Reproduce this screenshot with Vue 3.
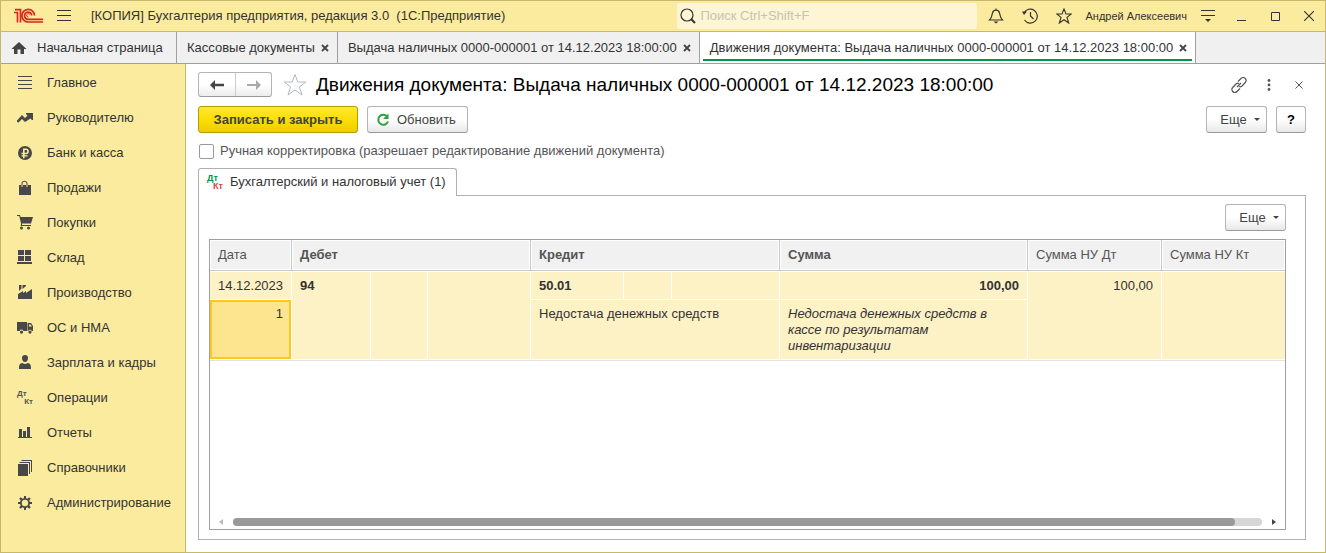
<script setup>
import { ref } from 'vue'

const search = ref('')
const manual = ref(false)

const tabs = [
  { title: 'Кассовые документы', active: false },
  { title: 'Выдача наличных 0000-000001 от 14.12.2023 18:00:00', active: false },
  { title: 'Движения документа: Выдача наличных 0000-000001 от 14.12.2023 18:00:00', active: true },
]

const sections = [
  { name: 'Главное', icon: 'M1 1h14v1H1zM1 5h14v1H1zM1 9h14v1H1zM1 13h14v1H1z' },
  { name: 'Руководителю', icon: 'M0 10.500L5 5l3 3 2.500-2.500L9 4V3h7v7h-1l-1.500-1.500L8 12 5 9l-3.500 3.500L0 12z' },
  { name: 'Банк и касса', icon: 'M8 1a7 7 0 1 1 0 14A7 7 0 0 1 8 1zM6 3.500v4.300H4.500v1.500H6v.9H4.500v1.300H6v1.700h1.600v-1.700h3v-1.300h-3v-.9h1.600c3.600 0 3.600-5.800 0-5.800zM7.600 5h1.500c1.500 0 1.500 2.800 0 2.800H7.600z' },
  { name: 'Продажи', icon: 'M2 5h2.500v2h1V5h4v2h1V5H14v10H2zM4.500 5V3.500C4.500-.3 10.500-.3 10.500 3.500V5h-1V3.500c0-2.300-4-2.300-4 0V5z' },
  { name: 'Покупки', icon: 'M0 0h3l.6 2H16l-2 6.500H5.200L5 10h9v1H3.500l.6-2.200L2.200 1H0zM4.500 11.500a1.500 1.500 0 1 1 0 3 1.500 1.500 0 0 1 0-3zM11.500 11.500a1.500 1.500 0 1 1 0 3 1.500 1.500 0 0 1 0-3z' },
  { name: 'Склад', icon: 'M1 0h6v5H1zM8 0h6v5H8zM1 6h6v5H1zM8 6h6v5H8zM0 12h15v2H0z' },
  { name: 'Производство', icon: 'M1 14V9l5-3v2l3-2v2l6-4v10zM2 0h2.500v3.500L2 6zM5.500 0H9v1L5.500 4z' },
  { name: 'ОС и НМА', icon: 'M0 2h10v9H6.400a2 2 0 0 0-3.800 0H0zM10.500 3H14l2 3v5h-1.200a2 2 0 0 0-3.600 0h-.7zM12 4.500v2h3l-1.500-2zM4.500 10.500a1.600 1.600 0 1 1 0 3.200 1.600 1.600 0 0 1 0-3.200zM13 10.500a1.600 1.600 0 1 1 0 3.200 1.600 1.600 0 0 1 0-3.200z' },
  { name: 'Зарплата и кадры', icon: 'M8 0a3 3 0 0 1 3 3c0 2-1 4-3 4S5 5 5 3a3 3 0 0 1 3-3zM5.500 8c1.500 1.300 3.500 1.300 5 0C13.500 8.500 14 10 14 14H2c0-4 .5-5.500 3.500-6z' },
  { name: 'Операции', dtkt: true },
  { name: 'Отчеты', icon: 'M2 4h3v8H2zM6 6h3v6H6zM10 2h3v10h-3zM1 12h14v1H1z' },
  { name: 'Справочники', icon: 'M1 4h10v12H1zM2.500 2H13v12h-1V3H2.500zM4.500 0H15v12h-1V1H4.500z' },
  { name: 'Администрирование', icon: 'M7 1h2v2l1.500.7 1.600-1.500 1.600 1.600-1.500 1.600L13 7h2v2h-2l-.7 1.600 1.500 1.600-1.600 1.600-1.600-1.500L9 13v2H7v-2l-1.600-.7-1.600 1.500-1.600-1.600 1.500-1.600L3 9H1V7h2l.7-1.600-1.500-1.600 1.600-1.600 1.600 1.500L7 3zM8 4.800a3.200 3.200 0 1 0 0 6.400 3.200 3.200 0 0 0 0-6.400z' },
]
</script>

<template>
  <div class="window">
    <header class="titlebar">
      <svg class="logo" viewBox="0 0 30 16" fill="none" stroke="#d9251d" stroke-width="1.700">
        <path d="M0 4.500h3.500V14.500M1 1.700h5.500V14.500" />
        <path d="M20.500 7.500A6.300 6.300 0 1 0 14.500 14H29" />
        <path d="M17.700 7.500A3.600 3.600 0 1 0 14.500 11.300H29" />
        <path d="M15.500 6.500A1.600 1.600 0 1 0 14.500 9" stroke-width="1" />
      </svg>
      <button class="plain burger" aria-label="Меню">
        <svg width="14" height="12" viewBox="0 0 14 12"><path d="M0 0h14v1H0zM0 5h14v1H0zM0 10h14v1H0z" fill="#333" /></svg>
      </button>
      <span class="app-name">[КОПИЯ] Бухгалтерия предприятия, редакция 3.0&nbsp; (1С:Предприятие)</span>
      <label class="search">
        <svg width="16" height="16" viewBox="0 0 16 16" fill="none" stroke="#333"><circle cx="7" cy="7" r="6" stroke-width="1.200" /><path d="M11.300 11.300L15 15" stroke-width="2" /></svg>
        <input v-model="search" type="text" placeholder="Поиск Ctrl+Shift+F" aria-label="Поиск">
      </label>
      <div class="tools">
        <button class="plain tool" aria-label="Уведомления">
          <svg width="16" height="16" viewBox="0 0 16 16" fill="none" stroke="#333" stroke-width="1.200"><path d="M1.500 12C4 9.500 3.500 8 4.500 5 5 3 6.500 2.200 8 2.200S11 3 11.500 5c1 3 .5 4.500 3 7zM8 .5v2" /><path d="M5.500 13.500h5L8 15.500z" fill="#333" stroke="none" /></svg>
        </button>
        <button class="plain tool" aria-label="История">
          <svg width="16" height="16" viewBox="0 0 16 16" fill="none" stroke="#333" stroke-width="1.200"><path d="M2 5a7 7 0 1 1 .5 7M8.500 4v4l3 3" /><path d="M0 3.500h5L2 7z" fill="#333" stroke="none" /></svg>
        </button>
        <button class="plain tool" aria-label="Избранное">
          <svg width="16" height="16" viewBox="0 0 16 16" fill="none" stroke="#333" stroke-width="1.100"><path d="M8 1l2 5h5.200l-4.200 3.400L12.700 15 8 11.700 3.300 15 5 9.400.8 6H6z" /></svg>
        </button>
        <span class="user">Андрей Алексеевич</span>
        <button class="plain tool" aria-label="Сервис">
          <svg width="14" height="14" viewBox="0 0 14 14"><path d="M0 1h14v1H0zM0 6h14v1H0zM4 10h6l-3 3z" fill="#333" /></svg>
        </button>
        <button class="plain tool" aria-label="Свернуть">
          <svg width="10" height="10" viewBox="0 0 10 10"><path d="M0 9h9v1H0z" fill="#333" /></svg>
        </button>
        <button class="plain tool" aria-label="Развернуть">
          <svg width="10" height="10" viewBox="0 0 10 10"><path d="M.5 1.500h8v8h-8z" fill="none" stroke="#333" /></svg>
        </button>
        <button class="plain tool" aria-label="Закрыть программу">
          <svg width="10" height="10" viewBox="0 0 10 10"><path d="M0 0l10 10M10 0L0 10" stroke="#333" stroke-width="1.100" /></svg>
        </button>
      </div>
    </header>

    <nav class="tabs">
      <a class="tab home" href="#">
        <svg width="16" height="14" viewBox="0 0 16 14"><path d="M8 1l7.500 7H13v5H9.500V8.500h-3V13H3V8H.5z" fill="#444" /></svg>
        Начальная страница
      </a>
      <div v-for="tab in tabs" :key="tab.title" class="tab" :class="{ active: tab.active }">
        <a href="#">{{ tab.title }}</a>
        <button class="plain" aria-label="Закрыть вкладку">
          <svg width="8" height="8" viewBox="0 0 8 8"><path d="M1 1l6 6M7 1L1 7" stroke="#444" stroke-width="1.800" /></svg>
        </button>
      </div>
    </nav>

    <div class="body">
      <nav class="sidebar">
        <a v-for="s in sections" :key="s.name" href="#" class="section">
          <span v-if="s.dtkt" class="dtkt"><span>Дт</span><span>Кт</span></span>
          <svg v-else width="16" height="16" viewBox="0 0 16 16"><path :d="s.icon" fill="#484848" fill-rule="evenodd" /></svg>
          {{ s.name }}
        </a>
      </nav>

      <main class="content">
        <div class="heading">
          <div class="history">
            <button aria-label="Назад"><svg width="14" height="10" viewBox="0 0 14 10"><path d="M0 5l5-5v3.700h9v2.600H5V10z" fill="#444" /></svg></button>
            <button aria-label="Вперед"><svg width="14" height="10" viewBox="0 0 14 10"><path d="M14 5L9 0v4H0v2h9v4z" fill="#aaa" /></svg></button>
          </div>
          <button class="plain" aria-label="Добавить в избранное">
            <svg width="24" height="24" viewBox="0 0 24 24"><path d="M12 1.500l2.800 7.500h8l-6.400 5 2.600 8-7-5-7 5 2.600-8L1.200 9h8z" fill="none" stroke="#b4b9c0" /></svg>
          </button>
          <h1>Движения документа: Выдача наличных 0000-000001 от 14.12.2023 18:00:00</h1>
          <div class="heading-tools">
            <button class="plain" aria-label="Получить ссылку">
              <svg width="16" height="16" viewBox="0 0 16 16" fill="none" stroke="#555" stroke-width="1.200"><path d="M7 4.500l3-3a2.800 2.800 0 0 1 4.300 0 2.800 2.800 0 0 1 0 4L11 9a2.800 2.800 0 0 1-3 .5M9 11.500l-3 3a2.800 2.800 0 0 1-4.300 0 2.800 2.800 0 0 1 0-4L5 7a2.800 2.800 0 0 1 3-.5M6 10l4-4" /></svg>
            </button>
            <button class="plain" aria-label="Еще действия">
              <svg width="4" height="12" viewBox="0 0 4 12" fill="#555"><circle cx="2" cy="1.500" r="1.400" /><circle cx="2" cy="6" r="1.400" /><circle cx="2" cy="10.500" r="1.400" /></svg>
            </button>
            <button class="plain" aria-label="Закрыть форму">
              <svg width="8" height="8" viewBox="0 0 8 8"><path d="M.5.5l7 7M7.500.5l-7 7" stroke="#555" /></svg>
            </button>
          </div>
        </div>

        <div class="toolbar">
          <button class="btn primary">Записать и закрыть</button>
          <button class="btn refresh">
            <svg width="14" height="14" viewBox="0 0 14 14"><path d="M11 3.500A5 5 0 1 0 12 8.500" fill="none" stroke="#2fa13a" stroke-width="2" /><path d="M12.500.5v5.500H7z" fill="#2fa13a" /></svg>
            Обновить
          </button>
          <span class="spacer"></span>
          <button class="btn more">Еще <i class="caret"></i></button>
          <button class="btn help">?</button>
        </div>

        <label class="check">
          <input v-model="manual" type="checkbox">
          Ручная корректировка (разрешает редактирование движений документа)
        </label>

        <div class="page-tabs">
          <button class="page-tab">
            <span class="dtkt colored"><span>Дт</span><span>Кт</span></span>
            Бухгалтерский и налоговый учет (1)
          </button>
        </div>

        <section class="panel">
          <div class="panel-bar">
            <button class="btn more">Еще <i class="caret"></i></button>
          </div>
          <div class="grid">
            <table>
              <colgroup>
                <col class="c-date"><col class="c-d1"><col class="c-d2"><col class="c-d3">
                <col class="c-k1"><col class="c-k2"><col class="c-k3">
                <col class="c-sum"><col class="c-nu"><col>
              </colgroup>
              <thead>
                <tr>
                  <th>Дата</th>
                  <th colspan="3" class="bold">Дебет</th>
                  <th colspan="3" class="bold">Кредит</th>
                  <th class="bold">Сумма</th>
                  <th>Сумма НУ Дт</th>
                  <th>Сумма НУ Кт</th>
                </tr>
              </thead>
              <tbody>
                <tr class="first">
                  <td>14.12.2023</td>
                  <td rowspan="2" class="bold">94</td>
                  <td rowspan="2"></td>
                  <td rowspan="2"></td>
                  <td class="bold">50.01</td>
                  <td></td>
                  <td></td>
                  <td class="bold num">100,00</td>
                  <td rowspan="2" class="num">100,00</td>
                  <td rowspan="2"></td>
                </tr>
                <tr class="second">
                  <td class="num selected">1</td>
                  <td colspan="3">Недостача денежных средств</td>
                  <td class="note">Недостача денежных средств в кассе по результатам инвентаризации</td>
                </tr>
              </tbody>
            </table>
            <div class="scroll">
              <button class="plain" aria-label="Прокрутить влево"><svg width="5" height="6" viewBox="0 0 5 6"><path d="M5 0v6L1 3z" fill="#bbb" /></svg></button>
              <div class="track"><div class="thumb"></div></div>
              <button class="plain" aria-label="Прокрутить вправо"><svg width="5" height="6" viewBox="0 0 5 6"><path d="M0 0v6l4-3z" fill="#444" /></svg></button>
            </div>
          </div>
        </section>
      </main>
    </div>
  </div>
</template>

<style>
body {
  margin: 0;
}
</style>

<style scoped>
.window,
.window * {
  box-sizing: border-box;
}
.window {
  display: flex;
  flex-direction: column;
  min-height: 100vh;
  border: 1px solid #c8b968;
  background: #fff;
  color: #333;
  font: 13px/16px "Liberation Sans", Arial, sans-serif;
}
svg {
  display: block;
  flex: none;
}
a {
  color: inherit;
  text-decoration: none;
}
button,
input {
  font: inherit;
  color: inherit;
}
.plain {
  display: flex;
  align-items: center;
  justify-content: center;
  padding: 0;
  border: 0;
  background: none;
}

.titlebar {
  display: flex;
  align-items: center;
  height: 31px;
  padding-left: 13px;
  background: #fbeb9e;
  border-bottom: 1px solid #c8b968;
}
.logo {
  width: 30px;
  height: 16px;
}
.burger {
  margin: 0 20px 0 13px;
}
.app-name {
  white-space: nowrap;
}
.search {
  display: flex;
  align-items: center;
  gap: 4px;
  width: 300px;
  height: 26px;
  margin-left: auto;
  padding: 0 3px;
  border-radius: 3px;
  background: #fdf5d3;
}
.search input {
  flex: 1;
  min-width: 0;
  padding: 0;
  border: 0;
  outline: 0;
  background: none;
}
.search input::placeholder {
  color: #c6c3b6;
  opacity: 1;
}
.tools {
  display: flex;
  align-items: center;
  margin-left: 2px;
}
.tool {
  width: 34px;
  height: 28px;
}
.tool:last-child {
  width: 32px;
}
.user {
  margin: 0 4px;
  font-size: 11px;
  white-space: nowrap;
}

.tabs {
  display: flex;
  height: 32px;
  background: #f0f0f0;
  border-bottom: 1px solid #a0a0a0;
}
.tab {
  display: flex;
  align-items: center;
  gap: 6px;
  padding: 0 8px 0 10px;
  border-right: 1px solid #a0a0a0;
  white-space: nowrap;
}
.home {
  gap: 10px;
  width: 176px;
}
.active {
  background: linear-gradient(#009646, #009646) center bottom 2px / calc(100% - 6px) 2px no-repeat #fff;
}

.body {
  display: flex;
  flex: 1;
}
.sidebar {
  flex: none;
  width: 185px;
  padding-top: 1px;
  background: #fbeb9e;
  border-right: 1px solid #c8b968;
}
.section {
  display: flex;
  align-items: center;
  gap: 14px;
  height: 35px;
  padding-left: 16px;
  white-space: nowrap;
}
.dtkt {
  display: flex;
  flex-direction: column;
  width: 16px;
  font-size: 8px;
  font-weight: bold;
  line-height: 8px;
  text-align: left;
  color: #555;
}
.dtkt span:last-child {
  align-self: flex-end;
}
.colored {
  font-size: 9px;
}
.colored span:first-child {
  color: #00964b;
}
.colored span:last-child {
  color: #d9443f;
}

.content {
  display: flex;
  flex: 1;
  flex-direction: column;
  min-width: 0;
  padding: 8px 19px 12px 12px;
}
.heading {
  display: flex;
  align-items: center;
  height: 25px;
}
.history {
  display: flex;
  height: 25px;
  width: 74px;
  margin-right: 11px;
  border: 1px solid #b4b4b4;
  border-bottom-color: #999;
  border-radius: 3px;
  background: linear-gradient(#fff 50%, #ececec);
}
.history button {
  display: flex;
  align-items: center;
  justify-content: center;
  width: 36px;
  padding: 0;
  border: 0;
  background: none;
}
.history button + button {
  border-left: 1px solid #ccc;
}
h1 {
  margin: 0 0 0 9px;
  color: #000;
  font-size: 19px;
  font-weight: normal;
  line-height: 24px;
  white-space: nowrap;
}
.heading-tools {
  display: flex;
  align-items: center;
  margin-left: auto;
  margin-right: -8px;
}
.heading-tools button {
  width: 30px;
  height: 24px;
}
.toolbar {
  display: flex;
  margin-top: 9px;
}
.btn {
  display: flex;
  align-items: center;
  justify-content: center;
  height: 27px;
  padding: 0 13px;
  border: 1px solid #b4b4b4;
  border-bottom-color: #999;
  border-radius: 3px;
  background: linear-gradient(#fff 50%, #e8e8e8);
  color: #444;
  white-space: nowrap;
}
.primary {
  width: 160px;
  margin-right: 9px;
  border-color: #b39c00;
  background: linear-gradient(#ffe92e, #fadb00 60%, #eecb00);
  font-weight: bold;
}
.refresh {
  justify-content: flex-start;
  gap: 7px;
  width: 101px;
  padding: 0 8px;
}
.spacer {
  flex: 1;
}
.more {
  gap: 7px;
  width: 61px;
  padding: 0 6px 0 13px;
}
.caret {
  border: 3px solid transparent;
  border-top-color: #444;
  border-bottom: 0;
}
.help {
  width: 30px;
  margin-left: 9px;
  padding: 0;
  color: #000;
  font-weight: bold;
}
.check {
  display: flex;
  align-items: center;
  gap: 6px;
  align-self: flex-start;
  margin: 10px 0 9px 1px;
  color: #555;
}
.check input {
  appearance: none;
  width: 15px;
  height: 15px;
  margin: 0;
  border: 1px solid #999;
  border-radius: 2px;
  background: #fff;
}
.check input:checked {
  background: #fadb00;
}
.page-tabs {
  display: flex;
  margin-bottom: -1px;
}
.page-tab {
  display: flex;
  align-items: center;
  gap: 7px;
  height: 28px;
  padding: 0 10px 2px 8px;
  border: 1px solid #b0b0b0;
  border-bottom: 0;
  border-radius: 3px 3px 0 0;
  background: #fff;
  z-index: 1;
}
.panel {
  display: flex;
  flex: 1;
  flex-direction: column;
  padding: 8px 19px 9px 10px;
  border: 1px solid #b0b0b0;
}
.panel-bar {
  display: flex;
  justify-content: flex-end;
  margin-bottom: 8px;
}
.grid {
  display: flex;
  flex: 1;
  flex-direction: column;
  border: 1px solid #a0a0a0;
}
table {
  width: 100%;
  table-layout: fixed;
  border-collapse: separate;
  border-spacing: 0;
  border-bottom: 1px solid #e3e3e3;
}
.c-date { width: 82px; }
.c-d1 { width: 79px; }
.c-d2 { width: 57px; }
.c-d3 { width: 103px; }
.c-k1 { width: 93px; }
.c-k2 { width: 48px; }
.c-k3 { width: 108px; }
.c-sum { width: 248px; }
.c-nu { width: 134px; }
th {
  height: 31px;
  padding: 0 8px;
  border-right: 1px solid #c8c8c8;
  border-bottom: 1px solid #c8c8c8;
  background: #f1f1f1;
  box-shadow: inset 0 0 0 1px #fff;
  color: #555;
  font-weight: normal;
  text-align: left;
}
td {
  padding: 6px 8px 5px;
  border-right: 1px solid #fff;
  border-bottom: 1px solid #fff;
  background: #fdf1c6;
  vertical-align: top;
}
th:last-child,
.first td:last-child {
  border-right: 0;
}
.first td {
  height: 29px;
  border-top: 1px solid #fff;
}
.second td {
  height: 60px;
}
.bold {
  font-weight: bold;
}
.num {
  text-align: right;
}
.note {
  font-style: italic;
}
.selected {
  background: #fde48e;
  box-shadow: inset 0 0 0 2px #fac81e;
}
.scroll {
  display: flex;
  align-items: center;
  gap: 10px;
  margin-top: auto;
  padding: 3px 8px;
}
.track {
  flex: 1;
  height: 8px;
  border-radius: 4px;
  background: #d6d6d6;
}
.thumb {
  width: calc(100% - 27px);
  height: 8px;
  border-radius: 4px;
  background: #999;
}
</style>
